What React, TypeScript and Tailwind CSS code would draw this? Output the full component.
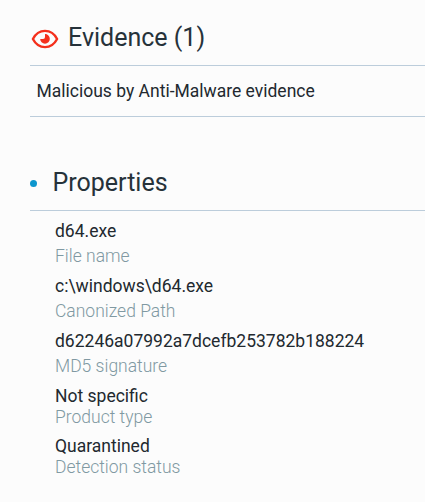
const properties = [
  { value: "d64.exe", label: "File name", row: "h-[55px]", labelGap: "mt-[5px]" },
  { value: "c:\\windows\\d64.exe", label: "Canonized Path", row: "h-[55px]", labelGap: "mt-[5px]" },
  { value: "d62246a07992a7dcefb253782b188224", label: "MD5 signature", row: "h-[55px]", labelGap: "mt-[5px]" },
  { value: "Not specific", label: "Product type", row: "h-[50px]", labelGap: "mt-px" },
  { value: "Quarantined", label: "Detection status", row: "h-[50px]", labelGap: "mt-px" },
];

const EyeIcon = () => (
  <svg className="ml-px mt-px w-7 h-5 shrink-0" viewBox="0 0 28 20" fill="none">
    <path
      d="M1.9 10C4.5 5 9 1.9 14 1.9S23.5 5 26.1 10C23.5 15 19 18.1 14 18.1S4.5 15 1.9 10Z"
      stroke="#f4301c"
      strokeWidth="2.4"
      strokeLinejoin="round"
    />
    <path d="M14 5.1A4.8 4.8 0 1 1 9.2 9.9H12A2 2 0 0 0 14 7.9Z" fill="#f4301c" />
  </svg>
);

const App = () => {
  return (
    <main className="h-[502px] w-full overflow-hidden bg-[#fcfcfc] pl-[30px] font-['Roboto',sans-serif] text-[17.5px] leading-5 text-[#22292f]">
      {/* Evidence */}
      <section>
        <div className="flex h-[66px] items-center border-b border-[#bccddb] pt-[11px]">
          <EyeIcon />
          <h2 className="ml-[9px] text-[25px] leading-7 text-[#26323a]">Evidence (1)</h2>
        </div>
        <div className="flex h-[51px] items-center border-b border-[#bccddb] pl-[6.5px]">
          <p>Malicious by Anti-Malware evidence</p>
        </div>
      </section>

      {/* Properties */}
      <section className="mt-[41px]">
        <div className="flex h-[53px] items-center border-b border-[#bccddb] pb-0.5">
          <span className="mt-px size-[7px] shrink-0 rounded-full bg-[#0c96cd]" />
          <h2 className="ml-[15.5px] text-[25px] leading-7 text-[#26323a]">Properties</h2>
        </div>
        <dl className="pl-[25px] pt-2.5">
          {properties.map((item) => (
            <div key={item.label} className={`flex flex-col-reverse justify-end ${item.row}`}>
              <dt className={`h-5 font-light text-[#8099a2] ${item.labelGap}`}>{item.label}</dt>
              <dd className="h-5 whitespace-nowrap">{item.value}</dd>
            </div>
          ))}
        </dl>
      </section>
    </main>
  );
};

export default App;
